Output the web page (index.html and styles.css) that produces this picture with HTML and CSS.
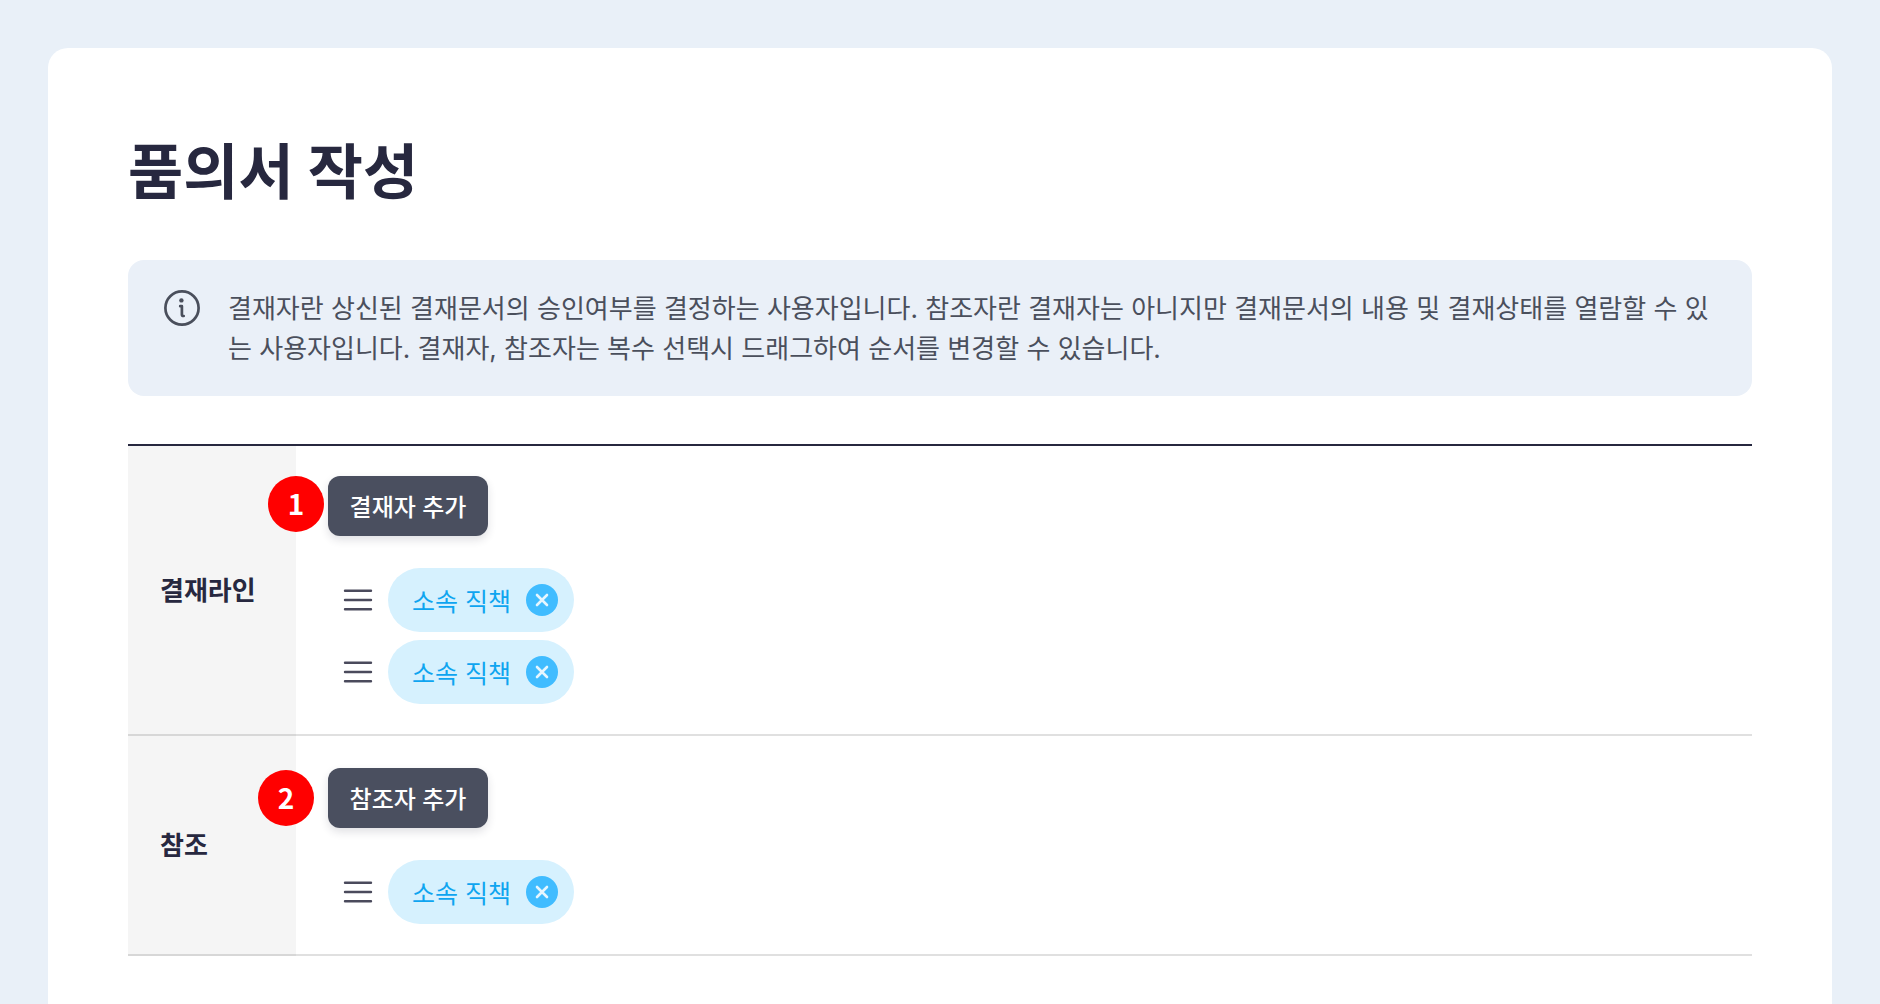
FILE: index.html
```
<!DOCTYPE html>
<html lang="ko">
  <head>
    <meta charset="UTF-8" />
    <meta name="viewport" content="width=device-width, initial-scale=1.0" />
    <title>품의서 작성</title>
    <link rel="stylesheet" href="styles.css">
  </head>
  <body>
    <main class="card">
      <h1>품의서 작성</h1>

      <div class="notice">
        <svg class="notice-icon" viewBox="0 0 36 36" fill="none" stroke="currentColor" stroke-linecap="round" stroke-linejoin="round" aria-hidden="true">
          <circle cx="18" cy="18" r="16.6" stroke-width="2.7" />
          <circle cx="17.4" cy="10.4" r="2.2" fill="currentColor" stroke="none" />
          <path d="M16.2 16.2h1.7v8.2q0 1.6 1.8 1.6" stroke-width="2.7" />
        </svg>
        <p>결재자란 상신된 결재문서의 승인여부를 결정하는 사용자입니다. 참조자란 결재자는 아니지만 결재문서의 내용 및 결재상태를 열람할 수 있는 사용자입니다. 결재자, 참조자는 복수 선택시 드래그하여 순서를 변경할 수 있습니다.</p>
      </div>

      <table class="form-table">
        <tr>
          <th scope="row">결재라인</th>
          <td>
            <div class="add-row">
              <span class="badge badge-first">1</span>
              <button type="button" class="add-btn">결재자 추가</button>
            </div>
            <ul class="people">
              <li>
                <svg class="handle" viewBox="0 0 32 32" aria-hidden="true"><path d="M3 6.8h26M3 16h26M3 25.2h26" /></svg>
                <span class="chip">소속 직책
                  <button type="button" class="remove" aria-label="삭제"><svg viewBox="0 0 32 32"><path d="M11 11l10 10M21 11L11 21" /></svg></button>
                </span>
              </li>
              <li>
                <svg class="handle" viewBox="0 0 32 32" aria-hidden="true"><path d="M3 6.8h26M3 16h26M3 25.2h26" /></svg>
                <span class="chip">소속 직책
                  <button type="button" class="remove" aria-label="삭제"><svg viewBox="0 0 32 32"><path d="M11 11l10 10M21 11L11 21" /></svg></button>
                </span>
              </li>
            </ul>
          </td>
        </tr>
        <tr>
          <th scope="row">참조</th>
          <td>
            <div class="add-row">
              <span class="badge badge-second">2</span>
              <button type="button" class="add-btn">참조자 추가</button>
            </div>
            <ul class="people">
              <li>
                <svg class="handle" viewBox="0 0 32 32" aria-hidden="true"><path d="M3 6.8h26M3 16h26M3 25.2h26" /></svg>
                <span class="chip">소속 직책
                  <button type="button" class="remove" aria-label="삭제"><svg viewBox="0 0 32 32"><path d="M11 11l10 10M21 11L11 21" /></svg></button>
                </span>
              </li>
            </ul>
          </td>
        </tr>
      </table>
    </main>
  </body>
</html>
```
FILE: styles.css
```
* {
  box-sizing: border-box;
}

body {
  margin: 0;
  padding: 48px 48px 0;
  min-height: 100vh;
  display: flex;
  background-color: #e9f0f8;
  color: #4a4f5c;
  font-family: "Inter", "Noto Sans CJK KR", sans-serif;
  font-size: 26px;
}

.card {
  flex: 1;
  padding: 80px 80px 48px;
  background-color: #fff;
  border-radius: 20px 20px 0 0;
}

h1 {
  margin: 0 0 44px;
  color: #27283f;
  font-size: 60px;
  font-weight: 700;
  line-height: 88px;
}

.notice {
  display: flex;
  gap: 28px;
  margin-bottom: 48px;
  padding: 29px 32px 27px 36px;
  background-color: #eaf0f8;
  border-radius: 16px;
}

.notice-icon {
  flex: none;
  width: 36px;
  height: 36px;
  margin-top: 1px;
}

.notice p {
  margin: 0;
  line-height: 40px;
}

.form-table {
  width: 100%;
  border-collapse: separate;
  border-spacing: 0;
  border-top: 2px solid #27283f;
}

th,
td {
  border-bottom: 2px solid rgba(0, 0, 0, 0.12);
}

th {
  width: 168px;
  padding: 0 32px 4px;
  background-color: #f5f5f5;
  color: #27283f;
  font-weight: 700;
  text-align: left;
  white-space: nowrap;
}

td {
  padding: 32px 32px 30px;
}

tr:first-child td {
  padding-top: 30px;
}

.add-row {
  position: relative;
  display: flex;
  margin-bottom: 32px;
}

.add-btn {
  min-width: 160px;
  height: 60px;
  padding: 0 20px 2px;
  background-color: #4a4f5f;
  color: #fff;
  border: none;
  border-radius: 12px;
  box-shadow: 0 4px 8px rgba(39, 40, 63, 0.14);
  font-family: inherit;
  font-size: 24px;
  font-weight: 500;
  cursor: pointer;
}

/* numbered markers over the table */
.badge {
  position: absolute;
  width: 56px;
  height: 56px;
  border-radius: 50%;
  background-color: #ff0000;
  color: #fff;
  font-family: "Noto Sans CJK KR", sans-serif;
  font-size: 28px;
  font-weight: 700;
  line-height: 54px;
  text-align: center;
}

.badge-first {
  top: 0;
  left: -60px;
}

.badge-second {
  top: 2px;
  left: -70px;
}

.people {
  display: flex;
  flex-direction: column;
  gap: 8px;
  margin: 0;
  padding: 0 0 0 14px;
  list-style: none;
}

.people li {
  display: flex;
  align-items: center;
  gap: 14px;
}

.handle {
  width: 32px;
  height: 32px;
  stroke: #4a4a5c;
  stroke-width: 2.4;
  stroke-linecap: round;
}

.chip {
  display: flex;
  align-items: center;
  gap: 15px;
  height: 64px;
  padding: 0 16px 0 24px;
  background-color: #d6f1fe;
  border-radius: 32px;
  color: #0ea5f0;
  font-size: 25px;
}

.remove {
  width: 32px;
  height: 32px;
  padding: 0;
  background-color: #40bcff;
  border: none;
  border-radius: 50%;
  cursor: pointer;
}

.remove svg {
  display: block;
  fill: none;
  stroke: #e6f6ff;
  stroke-width: 2.6;
  stroke-linecap: round;
}
```
